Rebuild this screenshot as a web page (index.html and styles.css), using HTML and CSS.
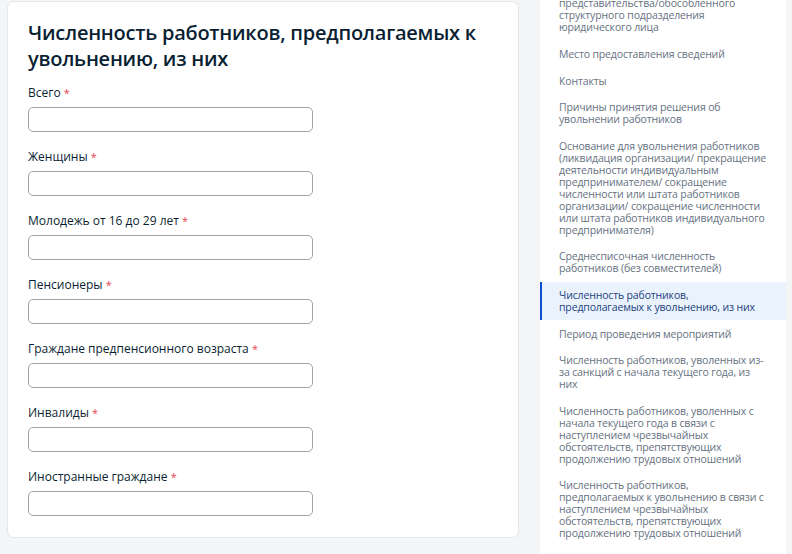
FILE: index.html
```html
<!doctype html>
<html lang="ru">

<head>
    <meta charset="utf-8">
    <meta name="viewport" content="width=device-width, initial-scale=1">
    <title>Численность работников</title>

    <link rel="stylesheet" href="styles.css">

</head>

<body>
    <div class="page">
        <main class="card">
            <h1 class="card-title">Численность работников, предполагаемых к увольнению, из них</h1>

            <form class="form">
                <div class="field">
                    <label class="field-label">Всего <span class="req">*</span></label>
                    <input class="field-input" type="text">
                </div>
                <div class="field">
                    <label class="field-label">Женщины <span class="req">*</span></label>
                    <input class="field-input" type="text">
                </div>
                <div class="field">
                    <label class="field-label">Молодежь от 16 до 29 лет <span class="req">*</span></label>
                    <input class="field-input" type="text">
                </div>
                <div class="field">
                    <label class="field-label">Пенсионеры <span class="req">*</span></label>
                    <input class="field-input" type="text">
                </div>
                <div class="field">
                    <label class="field-label">Граждане предпенсионного возраста <span class="req">*</span></label>
                    <input class="field-input" type="text">
                </div>
                <div class="field">
                    <label class="field-label">Инвалиды <span class="req">*</span></label>
                    <input class="field-input" type="text">
                </div>
                <div class="field">
                    <label class="field-label">Иностранные граждане <span class="req">*</span></label>
                    <input class="field-input" type="text">
                </div>
            </form>
        </main>

        <!-- side navigation over the form sections -->
        <aside class="nav">
            <ul class="nav-list">
                <li class="nav-item">Адрес филиала/<br>представительства/обособленного<br>структурного подразделения<br>юридического лица</li>
                <li class="nav-item">Место предоставления сведений</li>
                <li class="nav-item">Контакты</li>
                <li class="nav-item">Причины принятия решения об<br>увольнении работников</li>
                <li class="nav-item">Основание для увольнения работников<br>(ликвидация организации/ прекращение<br>деятельности индивидуальным<br>предпринимателем/ сокращение<br>численности или штата работников<br>организации/ сокращение численности<br>или штата работников индивидуального<br>предпринимателя)</li>
                <li class="nav-item">Среднесписочная численность<br>работников (без совместителей)</li>
                <li class="nav-item active">Численность работников,<br>предполагаемых к увольнению, из них</li>
                <li class="nav-item">Период проведения мероприятий</li>
                <li class="nav-item">Численность работников, уволенных из-<br>за санкций с начала текущего года, из<br>них</li>
                <li class="nav-item">Численность работников, уволенных с<br>начала текущего года в связи с<br>наступлением чрезвычайных<br>обстоятельств, препятствующих<br>продолжению трудовых отношений</li>
                <li class="nav-item">Численность работников,<br>предполагаемых к увольнению в связи с<br>наступлением чрезвычайных<br>обстоятельств, препятствующих<br>продолжению трудовых отношений</li>
            </ul>
        </aside>
    </div>
</body>

</html>
```

FILE: styles.css
```css
body {
    margin: 0;
    background-color: #f4f5f6;
    font-family: "Open Sans", Arial, sans-serif;
    color: #0b1f33;
    height: 554px;
    overflow: hidden;
}

.page {
    display: flex;
    align-items: flex-start;
    gap: 21px;
    padding-left: 7px;
}

.card {
    width: 512px;
    box-sizing: border-box;
    margin-top: 1px;
    padding: 18px 20px 21px 20px;
    background-color: #ffffff;
    border: 1px solid #e3e6ea;
    border-radius: 7px;
}

.card-title {
    margin: 0 0 13px 0;
    font-size: 20px;
    line-height: 26px;
    font-weight: 600;
    letter-spacing: -0.25px;
    color: #0b1f33;
}

.field {
    margin-bottom: 17px;
}

.field:last-child {
    margin-bottom: 0;
}

.field-label {
    display: block;
    margin-bottom: 6px;
    font-size: 12px;
    line-height: 16px;
    color: #0b1f33;
}

.req {
    color: #ee3f58;
    font-size: 11px;
}

.field-input {
    display: block;
    width: 285px;
    height: 25px;
    box-sizing: border-box;
    border: 1px solid #9da3a9;
    border-radius: 5px;
    background-color: #ffffff;
    font-family: inherit;
}

.nav {
    width: 246px;
    margin-top: -21.9px;
    background-color: #ffffff;
    box-sizing: border-box;
    min-height: 600px;
}

.nav-list {
    list-style: none;
    margin: 0;
    padding: 0;
}

.nav-item {
    padding: 7.3px 10px 7.3px 17px;
    font-size: 10.5px;
    line-height: 12px;
    letter-spacing: -0.15px;
    color: #66727f;
    white-space: nowrap;
    border-left: 2px solid transparent;
}

.nav-item.active {
    background-color: #eaf3fd;
    border-left-color: #0d4cd3;
    color: #1d3f7d;
}
```
